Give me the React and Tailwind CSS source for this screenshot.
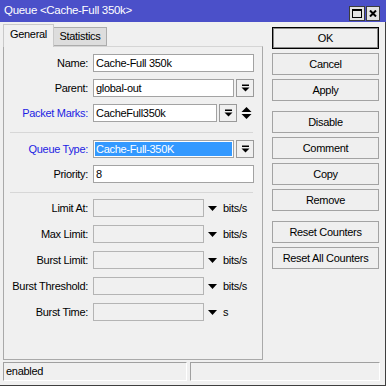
import React from 'react';

const font = "font-['Liberation_Sans',Arial,sans-serif] text-[11px] tracking-[-0.3px]";

function DropIcon() {
  return (
    <svg width="9" height="8" viewBox="0 0 9 8" className="fill-black">
      <rect x="1" y="0.5" width="7" height="1.5" />
      <path d="M0.5 3.5h8L4.5 7.5z" />
    </svg>
  );
}

function DropButton() {
  return (
    <div className="ml-[2px] w-[18px] h-[18px] border border-[#9a9a9a] bg-[#f0f0f0] flex items-center justify-center">
      <DropIcon />
    </div>
  );
}

function TextBox({ value, width, selected }) {
  return (
    <div
      className="h-[18px] border border-[#a3a3a3] bg-white p-px flex"
      style={{ width }}
    >
      <div
        className={`flex-1 flex items-center pl-[1px] leading-[14px] ${
          selected ? 'bg-[#3399ff] text-white' : 'text-black'
        }`}
      >
        {value}
      </div>
    </div>
  );
}

function Row({ label, blue, className = '', children }) {
  return (
    <div className={`flex items-center h-[18px] ${className}`}>
      <div className={`w-[84px] text-right ${blue ? 'text-[#1d1de3]' : 'text-black'}`}>
        {label}
      </div>
      <div className="ml-[5px] flex items-center h-full">{children}</div>
    </div>
  );
}

function RateRow({ label, unit, className = '' }) {
  return (
    <Row label={label} className={className}>
      <div className="w-[111px] h-[18px] border border-[#b4b4b4] bg-[#f0f0f0]" />
      <svg width="9" height="5" viewBox="0 0 9 5" className="ml-[4px] fill-black">
        <path d="M0 0h9L4.5 5z" />
      </svg>
      <span className="ml-[6px] text-black">{unit}</span>
    </Row>
  );
}

function Separator({ className = '' }) {
  return <div className={`ml-[6px] w-[243px] h-px bg-[#d7d7d7] ${className}`} />;
}

function SideButton({ label, primary, className = '' }) {
  return (
    <div
      className={`h-[22px] flex items-center justify-center text-black bg-[#efefef] border ${
        primary
          ? 'border-black shadow-[inset_0_0_0_1px_#8a8a8a]'
          : 'border-[#a3a3a3]'
      } ${className}`}
    >
      {label}
    </div>
  );
}

export default function App() {
  return (
    <div className={`w-[386px] h-[386px] bg-[#f0f0f0] flex flex-col overflow-hidden ${font}`}>
      {/* Title bar */}
      <div className="h-[22px] bg-[#4b50c9] flex items-center pl-[4px] pr-[6px] text-white text-[11.5px]">
        <span className="flex-1">Queue &lt;Cache-Full 350k&gt;</span>
        <div className="flex gap-px mt-[5px]">
          <div className="w-[16px] h-[15px] bg-[#e2e2e2] border border-[#3c3c3c] flex items-center justify-center">
            <div className="w-[10px] h-[9px] border border-black border-t-2" />
          </div>
          <div className="w-[14px] h-[15px] bg-[#e2e2e2] border border-[#3c3c3c] flex items-center justify-center">
            <svg width="8" height="7" viewBox="0 0 8 7">
              <path d="M1 0.5l6 6M7 0.5l-6 6" stroke="black" strokeWidth="2" />
            </svg>
          </div>
        </div>
      </div>

      {/* Body */}
      <div className="flex-1 flex flex-col border-r border-b border-[#3f3f3f]">
        <div className="flex">
          {/* Left: tabs + panel */}
          <div className="ml-[3px] pt-[2px] w-[260px] flex flex-col">
            <div className="flex items-end h-[22px]">
              <div className="relative z-10 -mb-px h-[23px] w-[51px] border border-b-0 border-[#c9c9c9] bg-[#f0f0f0] flex items-center justify-center pb-[3px] text-black">
                General
              </div>
              <div className="h-[19px] w-[53px] border border-l-0 border-[#acacac] bg-[#dddddd] flex items-center justify-center text-black">
                Statistics
              </div>
            </div>
            <div className="h-[314px] border border-[#a9a9a9] border-t-[#d5d5d5] flex flex-col pt-[7px]">
              <Row label="Name:">
                <TextBox value="Cache-Full 350k" width={161} />
              </Row>
              <Row label="Parent:" className="mt-[7px]">
                <TextBox value="global-out" width={141} />
                <DropButton />
              </Row>
              <Row label="Packet Marks:" blue className="mt-[7px]">
                <TextBox value="CacheFull350k" width={124} />
                <DropButton />
                <svg width="11" height="12" viewBox="0 0 11 12" className="ml-[4px] fill-black">
                  <path d="M5.5 0L10.5 5H0.5z" />
                  <path d="M0.5 7h10L5.5 12z" />
                </svg>
              </Row>
              <Separator className="mt-[10px]" />
              <Row label="Queue Type:" blue className="mt-[7px]">
                <TextBox value="Cache-Full-350K" width={141} selected />
                <DropButton />
              </Row>
              <Row label="Priority:" className="mt-[7px]">
                <TextBox value="8" width={161} />
              </Row>
              <Separator className="mt-[9px]" />
              <RateRow label="Limit At:" unit="bits/s" className="mt-[6px]" />
              <RateRow label="Max Limit:" unit="bits/s" className="mt-[8px]" />
              <RateRow label="Burst Limit:" unit="bits/s" className="mt-[8px]" />
              <RateRow label="Burst Threshold:" unit="bits/s" className="mt-[8px]" />
              <RateRow label="Burst Time:" unit="s" className="mt-[8px]" />
            </div>
          </div>

          {/* Right: buttons */}
          <div className="ml-[9px] w-[107px] pt-[5px] flex flex-col">
            <SideButton label="OK" primary />
            <SideButton label="Cancel" className="mt-[4px]" />
            <SideButton label="Apply" className="mt-[4px]" />
            <SideButton label="Disable" className="mt-[10px]" />
            <SideButton label="Comment" className="mt-[4px]" />
            <SideButton label="Copy" className="mt-[4px]" />
            <SideButton label="Remove" className="mt-[4px]" />
            <SideButton label="Reset Counters" className="mt-[10px]" />
            <SideButton label="Reset All Counters" className="mt-[4px]" />
          </div>
        </div>

        {/* Status bar */}
        <div className="mt-[2px] ml-[3px] flex gap-[3px]">
          <div className="w-[184px] h-[19px] border border-[#a0a0a0] border-r-white border-b-white flex items-center pl-[2px] text-black">
            enabled
          </div>
          <div className="w-[190px] h-[19px] border border-[#a0a0a0] border-r-white border-b-white" />
        </div>
      </div>
    </div>
  );
}
